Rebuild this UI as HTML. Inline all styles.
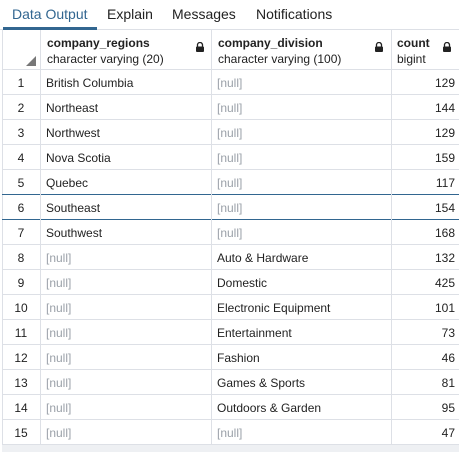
<!DOCTYPE html><html><head><style>
*{margin:0;padding:0;box-sizing:border-box}
body{width:459px;height:452px;background:#fff;font-family:"Liberation Sans",sans-serif;position:relative;overflow:hidden;color:#222}
.tabs{position:absolute;left:0;top:0;width:459px;height:30px;border-bottom:1px solid #dde0e6}
.tab{position:absolute;top:6px;font-size:14px;color:#222}
.ul{position:absolute;left:3px;top:27px;width:94px;height:3px;background:#326690}
.vl{position:absolute;left:2px;top:30px;width:1px;height:415px;background:#dde0e6}
.hdr{position:absolute;top:30px;height:40px;border-bottom:1px solid #dde0e6}
.r{position:absolute;left:2px;width:457px;height:25px;border-bottom:1px solid #dde0e6;font-size:12px}
.r div{position:absolute;top:6px}
.n{width:38px;text-align:center;left:0}
.c1{left:44px}.c2{left:215px}.c3{right:4px;text-align:right}
.nl{color:#9aa0a8}
.col{position:absolute;top:30px;width:1px;height:415px;background:#dde0e6}
.h1{position:absolute;top:36px;font-size:12px;font-weight:bold}
.h2{position:absolute;top:52px;font-size:12px}
.lock{position:absolute;top:42px;width:8px;height:10px}
.foot{position:absolute;left:2px;top:445px;width:457px;height:7px;background:#eef0f3}
</style></head><body>
<div class="tabs">
<div class="tab" style="left:12px;color:#326690">Data Output</div>
<div class="tab" style="left:107px">Explain</div>
<div class="tab" style="left:172px">Messages</div>
<div class="tab" style="left:256px">Notifications</div>
<div class="ul"></div>
</div>
<div class="vl"></div>
<div class="hdr" style="left:2px;width:457px"></div>
<svg style="position:absolute;left:25px;top:56px" width="12" height="10"><polygon points="11,0 11,10 1,10" fill="#777"/></svg>
<div class="h1" style="left:47px">company_regions</div><div class="h2" style="left:47px">character varying (20)</div>
<div class="h1" style="left:218px">company_division</div><div class="h2" style="left:218px">character varying (100)</div>
<div class="h1" style="left:397px">count</div><div class="h2" style="left:397px">bigint</div>
<svg class="lock" style="left:196px" viewBox="0 0 8 10"><path d="M1.5 4.5V3a2.5 2.5 0 0 1 5 0v1.5" stroke="#222" stroke-width="1.3" fill="none"/><rect x="0" y="4.5" width="8" height="5.5" rx="1" fill="#222"/></svg>
<svg class="lock" style="left:375px" viewBox="0 0 8 10"><path d="M1.5 4.5V3a2.5 2.5 0 0 1 5 0v1.5" stroke="#222" stroke-width="1.3" fill="none"/><rect x="0" y="4.5" width="8" height="5.5" rx="1" fill="#222"/></svg>
<svg class="lock" style="left:443px" viewBox="0 0 8 10"><path d="M1.5 4.5V3a2.5 2.5 0 0 1 5 0v1.5" stroke="#222" stroke-width="1.3" fill="none"/><rect x="0" y="4.5" width="8" height="5.5" rx="1" fill="#222"/></svg>
<div id="rows"></div>
<div class="r" style="top:70px"><div class="n">1</div><div class="c1">British Columbia</div><div class="c2 nl">[null]</div><div class="c3">129</div></div>
<div class="r" style="top:95px"><div class="n">2</div><div class="c1">Northeast</div><div class="c2 nl">[null]</div><div class="c3">144</div></div>
<div class="r" style="top:120px"><div class="n">3</div><div class="c1">Northwest</div><div class="c2 nl">[null]</div><div class="c3">129</div></div>
<div class="r" style="top:145px"><div class="n">4</div><div class="c1">Nova Scotia</div><div class="c2 nl">[null]</div><div class="c3">159</div></div>
<div class="r" style="top:170px;border-bottom-color:#326690"><div class="n">5</div><div class="c1">Quebec</div><div class="c2 nl">[null]</div><div class="c3">117</div></div>
<div class="r" style="top:195px;border-bottom-color:#326690"><div class="n">6</div><div class="c1">Southeast</div><div class="c2 nl">[null]</div><div class="c3">154</div></div>
<div class="r" style="top:220px"><div class="n">7</div><div class="c1">Southwest</div><div class="c2 nl">[null]</div><div class="c3">168</div></div>
<div class="r" style="top:245px"><div class="n">8</div><div class="c1 nl">[null]</div><div class="c2">Auto &amp; Hardware</div><div class="c3">132</div></div>
<div class="r" style="top:270px"><div class="n">9</div><div class="c1 nl">[null]</div><div class="c2">Domestic</div><div class="c3">425</div></div>
<div class="r" style="top:295px"><div class="n">10</div><div class="c1 nl">[null]</div><div class="c2">Electronic Equipment</div><div class="c3">101</div></div>
<div class="r" style="top:320px"><div class="n">11</div><div class="c1 nl">[null]</div><div class="c2">Entertainment</div><div class="c3">73</div></div>
<div class="r" style="top:345px"><div class="n">12</div><div class="c1 nl">[null]</div><div class="c2">Fashion</div><div class="c3">46</div></div>
<div class="r" style="top:370px"><div class="n">13</div><div class="c1 nl">[null]</div><div class="c2">Games &amp; Sports</div><div class="c3">81</div></div>
<div class="r" style="top:395px"><div class="n">14</div><div class="c1 nl">[null]</div><div class="c2">Outdoors &amp; Garden</div><div class="c3">95</div></div>
<div class="r" style="top:420px"><div class="n">15</div><div class="c1 nl">[null]</div><div class="c2 nl">[null]</div><div class="c3">47</div></div>
<div class="col" style="left:40px"></div>
<div class="col" style="left:211px"></div>
<div class="col" style="left:391px"></div>
<div class="foot"></div>
</body></html>
